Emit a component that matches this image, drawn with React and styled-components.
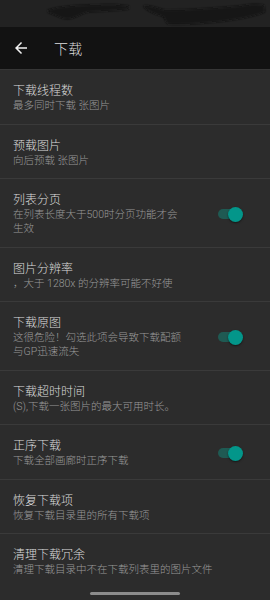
import React from 'react'
import styled, { createGlobalStyle } from 'styled-components'

const GlobalStyle = createGlobalStyle`
  html, body {
    margin: 0;
    padding: 0;
    background: #2c2c2c;
  }
  * {
    box-sizing: border-box;
  }
`

const Screen = styled.div`
  position: relative;
  width: 270px;
  min-height: 600px;
  overflow: hidden;
  background: #2c2c2c;
  font-family: Roboto, "Noto Sans CJK SC", sans-serif;
  font-weight: 300;
  -webkit-font-smoothing: antialiased;
`

const StatusBar = styled.div`
  height: 27px;
  background: #222222;
`

const Toolbar = styled.div`
  display: flex;
  align-items: center;
  height: 43px;
  background: #121212;
  border-bottom: 1px solid #363636;
`

const BackButton = styled.div`
  display: flex;
  align-items: center;
  justify-content: center;
  width: 18px;
  height: 18px;
  margin-left: 12px;
  margin-right: 24px;
`

const Title = styled.div`
  color: #dedede;
  font-size: 14px;
  letter-spacing: 0.3px;
`

const List = styled.div`
  display: flex;
  flex-direction: column;
`

const Row = styled.div`
  display: flex;
  align-items: center;
  padding: 13px 27px 10.5px 13px;
  border-bottom: ${(p) => (p.last ? 'none' : '1px solid #3a3a3a')};
`

const Texts = styled.div`
  flex: 1;
  min-width: 0;
`

const RowTitle = styled.div`
  color: #dcdcdc;
  font-size: 12px;
  line-height: 16px;
`

const RowDesc = styled.div`
  max-width: ${(p) => (p.narrow ? '172px' : 'none')};
  color: #9a9a9a;
  font-size: 10.5px;
  line-height: 14px;
`

const Switch = styled.div`
  position: relative;
  width: 25px;
  height: 15px;
  flex-shrink: 0;
`

const Track = styled.div`
  position: absolute;
  left: 0;
  right: 2px;
  top: 2.5px;
  height: 10px;
  border-radius: 5px;
  background: #1f5a53;
`

const Knob = styled.div`
  position: absolute;
  right: 0;
  top: 0;
  width: 15px;
  height: 15px;
  border-radius: 50%;
  background: #03968a;
  box-shadow: 0 1px 2px rgba(0, 0, 0, 0.5);
`

const NavPill = styled.div`
  position: absolute;
  left: 90px;
  bottom: 5px;
  width: 90px;
  height: 3px;
  border-radius: 2px;
  background: #8c8c8c;
`

const items = [
  { title: '下载线程数', desc: '最多同时下载 张图片' },
  { title: '预载图片', desc: '向后预载 张图片' },
  { title: '列表分页', desc: '在列表长度大于500时分页功能才会生效', toggle: true },
  { title: '图片分辨率', desc: '，大于 1280x 的分辨率可能不好使' },
  { title: '下载原图', desc: '这很危险！勾选此项会导致下载配额与GP迅速流失', toggle: true },
  { title: '下载超时时间', desc: '(S),下载一张图片的最大可用时长。' },
  { title: '正序下载', desc: '下载全部画廊时正序下载', toggle: true },
  { title: '恢复下载项', desc: '恢复下载目录里的所有下载项' },
  { title: '清理下载冗余', desc: '清理下载目录中不在下载列表里的图片文件' },
]

const Scribbles = () => (
  <svg width="270" height="27" viewBox="0 0 270 27">
    <defs>
      <filter id="blur" x="-10%" y="-50%" width="120%" height="200%">
        <feGaussianBlur stdDeviation="1.2" />
      </filter>
    </defs>
    <g fill="#131313" filter="url(#blur)">
      <path d="M48 10 C60 6 80 5 98 5 C110 4 122 5 129 6 L129 9 C115 11 100 11 88 12 C80 14 76 18 68 19 C62 19 58 16 52 14 C48 13 47 11 48 10 Z" />
      <path d="M143 6 C150 5 156 8 165 10 C190 10 215 8 240 6 C250 4 258 4 264 5 L265 12 C255 16 240 19 225 21 C205 23 185 25 168 24 C165 22 166 18 162 16 C155 14 148 12 143 6 Z" />
    </g>
  </svg>
)

const ArrowBack = () => (
  <svg width="18" height="18" viewBox="0 0 24 24">
    <path
      fill="#f2f2f2"
      d="M20 11H7.83l5.59-5.59L12 4l-8 8 8 8 1.41-1.41L7.83 13H20v-2z"
    />
  </svg>
)

const App = () => {
  return (
    <Screen>
      <GlobalStyle />
      <StatusBar>
        <Scribbles />
      </StatusBar>
      <Toolbar>
        <BackButton>
          <ArrowBack />
        </BackButton>
        <Title>下载</Title>
      </Toolbar>
      <List>
        {items.map((item, i) => (
          <Row key={item.title} last={i === items.length - 1}>
            <Texts>
              <RowTitle>{item.title}</RowTitle>
              <RowDesc narrow={item.toggle}>{item.desc}</RowDesc>
            </Texts>
            {item.toggle && (
              <Switch>
                <Track />
                <Knob />
              </Switch>
            )}
          </Row>
        ))}
      </List>
      <NavPill />
    </Screen>
  )
}

export default App
